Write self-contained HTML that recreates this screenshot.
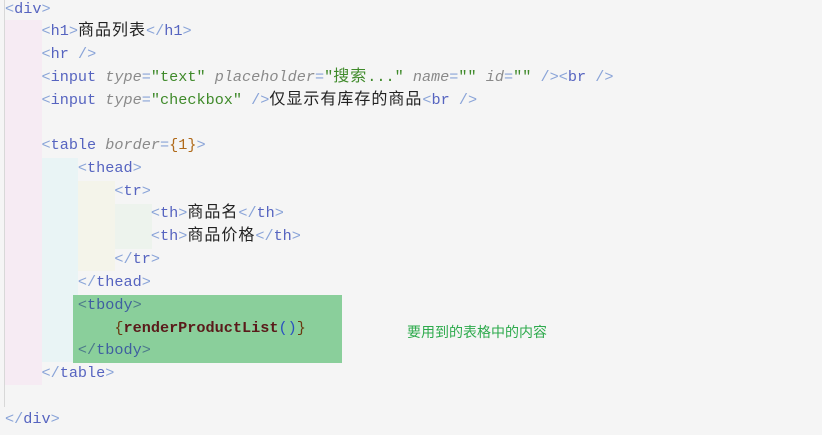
<!DOCTYPE html>
<html><head><meta charset="utf-8"><style>
body{margin:0;width:822px;height:435px;background:#f5f5f5;overflow:hidden;position:relative;font-family:"Liberation Mono","Noto Sans CJK SC",monospace;font-size:15.2px;}
.bg{position:absolute}
.l{position:absolute;left:5px;height:23px;line-height:23px;white-space:pre;color:#333}
.b{color:#8aa4d8}.t{color:#5664c0}.a{color:#8a8a8a;font-style:italic}.s{color:#3f8a2a}.n{color:#b06a1a}
.c{font-family:"Noto Sans CJK SC",sans-serif;font-size:16px;letter-spacing:1px;color:#222;line-height:1px}
.cs{font-family:"Noto Sans CJK SC",sans-serif;font-size:16px;letter-spacing:1px;color:#3f8a2a;line-height:1px}
.f{color:#5a1a1a;font-weight:bold}.p{color:#2a50c0}
</style></head><body>
<div class="bg" style="left:4px;top:0;width:1px;height:407px;background:#d8d8d8"></div>
<div class="bg" style="left:5px;top:20px;width:37px;height:365px;background:#f6ebf3"></div>
<div class="bg" style="left:42px;top:158px;width:36px;height:204px;background:#e9f4f5"></div>
<div class="bg" style="left:78px;top:181px;width:37px;height:90px;background:#f4f4ea"></div>
<div class="bg" style="left:115px;top:204px;width:37px;height:45px;background:#edf3ed"></div>
<div class="bg" style="left:73px;top:295px;width:269px;height:68px;background:#8acf9b"></div>
<div class="l" style="top:-2px"><span class="b">&lt;</span><span class="t">div</span><span class="b">&gt;</span></div>
<div class="l" style="top:20px">    <span class="b">&lt;</span><span class="t">h1</span><span class="b">&gt;</span><span class="c">商品列表</span><span class="b">&lt;/</span><span class="t">h1</span><span class="b">&gt;</span></div>
<div class="l" style="top:43px">    <span class="b">&lt;</span><span class="t">hr</span> <span class="b">/&gt;</span></div>
<div class="l" style="top:66px">    <span class="b">&lt;</span><span class="t">input</span> <span class="a">type</span><span class="b">=</span><span class="s">"text"</span> <span class="a">placeholder</span><span class="b">=</span><span class="s">"<span class="cs">搜索</span>..."</span> <span class="a">name</span><span class="b">=</span><span class="s">""</span> <span class="a">id</span><span class="b">=</span><span class="s">""</span> <span class="b">/&gt;&lt;</span><span class="t">br</span> <span class="b">/&gt;</span></div>
<div class="l" style="top:89px">    <span class="b">&lt;</span><span class="t">input</span> <span class="a">type</span><span class="b">=</span><span class="s">"checkbox"</span> <span class="b">/&gt;</span><span class="c">仅显示有库存的商品</span><span class="b">&lt;</span><span class="t">br</span> <span class="b">/&gt;</span></div>
<div class="l" style="top:134px">    <span class="b">&lt;</span><span class="t">table</span> <span class="a">border</span><span class="b">=</span><span class="n">{1}</span><span class="b">&gt;</span></div>
<div class="l" style="top:157px">        <span class="b">&lt;</span><span class="t">thead</span><span class="b">&gt;</span></div>
<div class="l" style="top:180px">            <span class="b">&lt;</span><span class="t">tr</span><span class="b">&gt;</span></div>
<div class="l" style="top:202px">                <span class="b">&lt;</span><span class="t">th</span><span class="b">&gt;</span><span class="c">商品名</span><span class="b">&lt;/</span><span class="t">th</span><span class="b">&gt;</span></div>
<div class="l" style="top:225px">                <span class="b">&lt;</span><span class="t">th</span><span class="b">&gt;</span><span class="c">商品价格</span><span class="b">&lt;/</span><span class="t">th</span><span class="b">&gt;</span></div>
<div class="l" style="top:248px">            <span class="b">&lt;/</span><span class="t">tr</span><span class="b">&gt;</span></div>
<div class="l" style="top:271px">        <span class="b">&lt;/</span><span class="t">thead</span><span class="b">&gt;</span></div>
<div class="l" style="top:294px">        <span class="b" style="color:#4c7a8a">&lt;</span><span class="t" style="color:#3f5fa0">tbody</span><span class="b" style="color:#4c7a8a">&gt;</span></div>
<div class="l" style="top:317px">            <span class="n" style="color:#6a3a10">{</span><span class="f">renderProductList</span><span class="p">()</span><span class="n" style="color:#6a3a10">}</span></div>
<div class="l" style="top:339px">        <span class="b" style="color:#4c7a8a">&lt;/</span><span class="t" style="color:#3f5fa0">tbody</span><span class="b" style="color:#4c7a8a">&gt;</span></div>
<div class="l" style="top:362px">    <span class="b">&lt;/</span><span class="t">table</span><span class="b">&gt;</span></div>
<div class="l" style="top:408px"><span class="b">&lt;/</span><span class="t">div</span><span class="b">&gt;</span></div>
<div style="position:absolute;left:407px;top:322px;font-family:'Noto Sans CJK SC',sans-serif;font-size:14px;color:#2daa4c;line-height:20px">要用到的表格中的内容</div>
</body></html>
